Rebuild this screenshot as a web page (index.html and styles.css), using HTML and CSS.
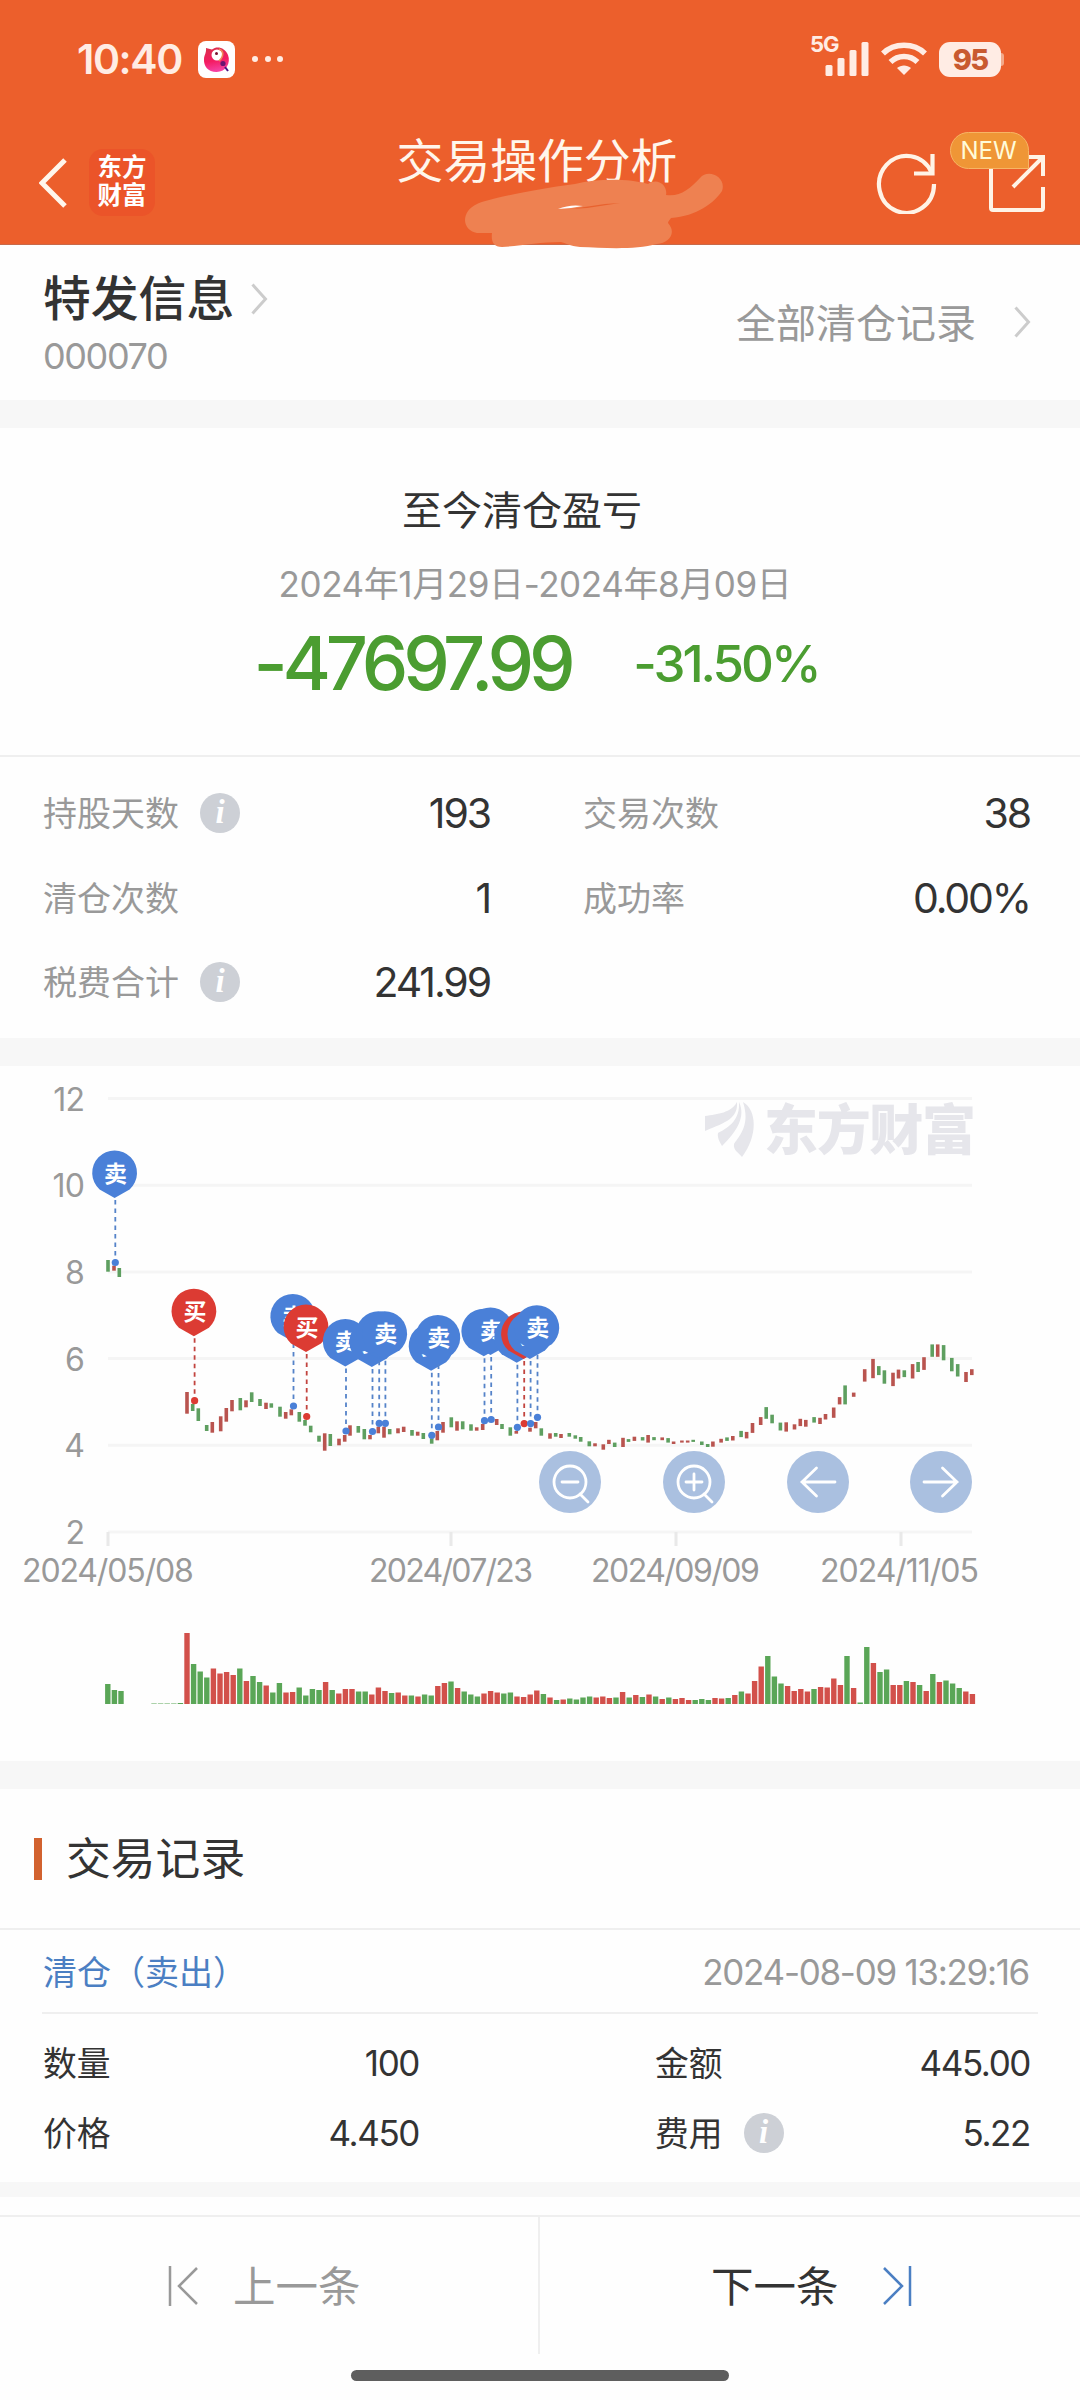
FILE: index.html
```html
<!DOCTYPE html>
<html lang="zh-CN">
<head>
  <meta charset="UTF-8" />
  <meta name="viewport" content="width=device-width, initial-scale=1" />
  <title>交易操作分析</title>
  <link rel="stylesheet" href="styles.css">
</head>
<body>
  <header class="header">
    <div class="status">
      <span class="time">10:40</span>
      <svg class="app-icon" width="37" height="37" viewBox="0 0 37 37">
        <defs>
          <linearGradient id="bird" x1="0" y1="0" x2="0.2" y2="1">
            <stop offset="0" stop-color="#d8304a" />
            <stop offset="0.6" stop-color="#f41c62" />
            <stop offset="1" stop-color="#f53fa0" />
          </linearGradient>
        </defs>
        <rect width="37" height="37" rx="8" fill="#fff" />
        <path d="M8 7 L14 8.500 C19 4.500 27 6.500 30 14 C33 22 28 31 18.500 31 C10 31 5.500 25 6 18 C6.200 14 8.500 12 8 7Z" fill="url(#bird)" />
        <circle cx="19" cy="14" r="5.500" fill="#fff" />
        <circle cx="18.500" cy="12.500" r="1.500" fill="#7a1030" />
        <path d="M21 8 C26 10 26 15 21 20" fill="none" stroke="#f08a5a" stroke-width="1.600" />
        <circle cx="25" cy="22.500" r="2.600" fill="#6a1270" />
        <path d="M27 26 l3 4" stroke="#4a1480" stroke-width="2" />
      </svg>
      <span class="dots"><i></i><i></i><i></i></span>
      <svg class="signal" width="60" height="54" viewBox="0 -12 60 54">
        <text x="0" y="16" class="net">5G</text>
        <g fill="#ffece4">
          <rect x="15.500" y="29" width="7" height="11" rx="1.500" />
          <rect x="27.500" y="22" width="7" height="18" rx="1.500" />
          <rect x="39.500" y="14" width="7" height="26" rx="1.500" />
          <rect x="51.500" y="6" width="7" height="34" rx="1.500" />
        </g>
      </svg>
      <svg class="wifi" width="46" height="34" viewBox="0 0 46 34">
        <g fill="none" stroke="#ffece4" stroke-width="5.500">
          <path d="M2 11.500 C13 0.500 33 0.500 44 11.500" />
          <path d="M9.500 20 C17 12.500 29 12.500 36.500 20" />
        </g>
        <path d="M16 26 C20 22.500 26 22.500 30 26 L23 33Z" fill="#ffece4" />
      </svg>
      <span class="battery">95</span>
    </div>
    <div class="nav">
      <svg class="back" width="30" height="52" viewBox="0 0 30 52">
        <path d="M26 3 L3 26 L26 49" fill="none" stroke="#fff6ec" stroke-width="5" />
      </svg>
      <div class="brand">东方<br>财富</div>
      <h1 class="title">交易操作分析</h1>
      <svg class="refresh" width="62" height="62" viewBox="0 0 62 62">
        <path d="M58 32 A27.500 28.500 0 1 1 55.500 20.500" fill="none" stroke="#fff3e6" stroke-width="4.200" />
        <path d="M56.500 2 V21.500 H38" fill="none" stroke="#fff3e6" stroke-width="4.200" />
      </svg>
      <div class="share">
        <svg width="58" height="60" viewBox="0 0 58 60">
          <g fill="none" stroke="#fff3e6" stroke-width="4">
            <path d="M3 12 V55 Q3 57 5 57 H53 Q55 57 55 55 V34" />
            <path d="M38 4 H55 V23" />
            <path d="M55 4 L25 34" />
          </g>
        </svg>
        <span class="badge">NEW</span>
      </div>
    </div>
    <!-- hidden account line -->
    <svg class="scribble" width="270" height="76" viewBox="0 0 270 76">
      <path d="M31 30 h8" stroke="#ffe9da" stroke-width="2" />
      <path d="M12 31 C22 26 65 17 110 11 C135 5 165 6 183 11 C193 4 203 13 201 22 C215 24 225 16 235 5 C243 -5 262 4 257 18 C249 30 232 43 206 45 C205 47 203 48 203 50 C212 60 204 70 192 71 C170 77 140 75 115 74 C105 73 100 70 96 69 C75 69 55 73 37 74 C28 74 26 68 27 60 L12 60 C-4 57 -4 38 12 31Z" fill="#ee8151" />
      <path d="M106 36 L140 31 L155 30 L122 35Z" fill="#e8622f" />
      <path d="M93 36 Q105 31 118 33 L106 35Z" fill="#fff" />
    </svg>
  </header>

  <section class="stock">
    <div>
      <div class="stock-name">特发信息
        <svg width="17" height="32" viewBox="0 0 17 32"><path d="M1.500 1.500 L14.500 16 L1.500 30.500" fill="none" stroke="#ccc" stroke-width="3" /></svg>
      </div>
      <div class="stock-code">000070</div>
    </div>
    <div class="all-records"><span>全部清仓记录</span>
      <svg width="17" height="32" viewBox="0 0 17 32"><path d="M1.500 1.500 L14.500 16 L1.500 30.500" fill="none" stroke="#ccc" stroke-width="3" /></svg>
    </div>
  </section>

  <section class="summary">
    <h2>至今清仓盈亏</h2>
    <div class="period">2024年1月29日-2024年8月09日</div>
    <div class="profit"><span class="amount">-47697.99</span><span class="percent">-31.50%</span></div>
  </section>

  <section class="stats">
    <div class="stat"><span>持股天数</span><i class="info">i</i><b>193</b></div>
    <div class="stat"><span>交易次数</span><b>38</b></div>
    <div class="stat"><span>清仓次数</span><b>1</b></div>
    <div class="stat"><span>成功率</span><b>0.00%</b></div>
    <div class="stat"><span>税费合计</span><i class="info">i</i><b>241.99</b></div>
  </section>

  <section class="chart">
    <svg id="chart" width="1080" height="695" viewBox="0 1066 1080 695">
      <g id="grid"></g>
      <g class="watermark">
        <path d="M705 1116 C718 1114 731 1113 737 1102 C738 1118 727 1122 705 1131Z" />
        <path d="M718 1133 C730 1127 740 1119 739 1102 C746 1117 737 1131 722 1146 C720 1142 717 1138 718 1133Z" />
        <path d="M743 1102 C757 1110 758 1136 742 1157 C738 1152 733 1150 734 1144 C741 1134 750 1124 743 1102Z" />
        <text x="764" y="1150" textLength="212">东方财富</text>
      </g>
      <g id="candles"></g>
      <g id="pins"></g>
      <g class="tool">
        <circle cx="570" cy="1482" r="31" />
        <circle class="line" cx="570" cy="1482" r="16" />
        <path d="M562 1482 h16 M580 1494 l8 8" />
      </g>
      <g class="tool">
        <circle cx="694" cy="1482" r="31" />
        <circle class="line" cx="694" cy="1482" r="16" />
        <path d="M686 1482 h16 M694 1474 v16 M704 1494 l8 8" />
      </g>
      <g class="tool">
        <circle cx="818" cy="1482" r="31" />
        <path d="M835 1482 H802 M816.500 1468 L802 1482 L816.500 1496" />
      </g>
      <g class="tool">
        <circle cx="941" cy="1482" r="31" />
        <path d="M924 1482 H957 M942.500 1468 L957 1482 L942.500 1496" />
      </g>
      <g id="volumes"></g>
    </svg>
  </section>

  <section class="records">
    <h3>交易记录</h3>
    <div class="record-head"><span class="kind">清仓（卖出）</span><span class="when">2024-08-09 13:29:16</span></div>
    <div class="record-body">
      <div class="cell"><span>数量</span><b>100</b></div>
      <div class="cell"><span>金额</span><b>445.00</b></div>
      <div class="cell"><span>价格</span><b>4.450</b></div>
      <div class="cell"><span>费用</span><i class="info">i</i><b>5.22</b></div>
    </div>
  </section>

  <footer class="pager">
    <div class="prev">
      <svg width="32" height="42" viewBox="0 0 32 42"><path d="M2 1 V41 M29 3 L11 21 L29 39" fill="none" stroke="#999" stroke-width="2.500" /></svg>
      <span>上一条</span>
    </div>
    <div class="next">
      <span>下一条</span>
      <svg width="32" height="42" viewBox="0 0 32 42"><path d="M29 1 V41 M3 3 L21 21 L3 39" fill="none" stroke="#4b7fc3" stroke-width="2.500" /></svg>
    </div>
  </footer>
  <div class="home-bar"></div>

  <script src="chart.js"></script>
</body>
</html>
```
FILE: styles.css
```css
* {
  box-sizing: border-box;
}
body {
  margin: 0;
  width: 1080px;
  height: 2400px;
  overflow: hidden;
  background: #fefefe;
  color: #333;
  font-family: Inter, "Noto Sans CJK SC", sans-serif;
}
h1, h2, h3 {
  margin: 0;
  font-weight: 400;
}
b {
  font-weight: 400;
}
svg {
  display: block;
  flex: none;
}

/* header */
.header {
  position: relative;
  height: 245px;
  background: #ec5f2c;
  border-bottom: 1px solid #c86a4a;
}
.status {
  display: flex;
  align-items: center;
  height: 118px;
  padding: 0 79px 0 77px;
}
.time {
  width: 121px;
  color: #ffece4;
  font-size: 41px;
  font-weight: 600;
  letter-spacing: -1.4px;
  line-height: 50px;
}
.dots {
  display: flex;
  gap: 6.5px;
  margin-left: 17px;
}
.dots i {
  width: 6px;
  height: 6px;
  border-radius: 50%;
  background: #ffece4;
}
.signal {
  margin-left: auto;
  margin-top: -16px;
}
.net {
  font-size: 22px;
  font-weight: 700;
  letter-spacing: -1px;
  fill: #ffece4;
}
.wifi {
  margin-left: 11px;
}
.battery {
  position: relative;
  margin-left: 12px;
  width: 62px;
  height: 35px;
  border-radius: 11px;
  background: #ffece4;
  color: #c85a30;
  font-size: 29px;
  font-weight: 800;
  letter-spacing: -1.8px;
  line-height: 35px;
  text-align: center;
}
.battery::after {
  content: "";
  position: absolute;
  right: -3px;
  top: 11px;
  width: 3px;
  height: 13px;
  border-radius: 0 3px 3px 0;
  background: #f3a98a;
}
.nav {
  display: flex;
  align-items: center;
  height: 129px;
  padding: 0 34px 0 39px;
}
.brand {
  width: 66px;
  height: 67px;
  margin-left: 20px;
  padding-top: 4px;
  border-radius: 14px;
  background: #eb5429;
  color: #fff;
  font-size: 24.5px;
  font-weight: 700;
  line-height: 28px;
  text-align: center;
}
.title {
  flex: 1;
  margin: -43px 0 0 73px;
  color: #fff6ec;
  font-size: 46.8px;
  line-height: 60px;
  text-align: center;
}
.refresh {
  margin-left: 30px;
}
.share {
  position: relative;
  margin-left: 50px;
}
.badge {
  position: absolute;
  left: -38px;
  top: -21px;
  width: 79px;
  height: 37px;
  border: 1px solid #f7b565;
  border-radius: 19px 19px 0 19px;
  background: #ef9636;
  color: #fffbd8;
  font-size: 24px;
  line-height: 36px;
  padding-right: 2px;
  text-align: center;
}
.scribble {
  position: absolute;
  left: 465px;
  top: 173px;
}

/* stock line */
.stock {
  display: flex;
  justify-content: space-between;
  height: 183px;
  padding: 24px 49px 0 43px;
  border-bottom: 28px solid #f7f7f7;
}
.stock-name {
  display: flex;
  align-items: center;
  gap: 17px;
  font-size: 47.8px;
  font-weight: 500;
  line-height: 60px;
}
.stock-code {
  color: #999;
  font-size: 36px;
  letter-spacing: -1.4px;
  line-height: 54px;
}
.all-records {
  display: flex;
  align-items: center;
  gap: 38px;
  height: 106px;
  color: #999;
  font-size: 40px;
}
.all-records span {
  padding-bottom: 3px;
}

/* profit */
.summary {
  height: 329px;
  padding-top: 53px;
  border-bottom: 2px solid #efefef;
  text-align: center;
}
.summary h2 {
  padding-right: 36px;
  font-size: 40px;
  line-height: 60px;
}
.period {
  margin-top: 15px;
  padding-right: 10px;
  color: #999;
  font-size: 35px;
  line-height: 56px;
  letter-spacing: -0.4px;
}
.profit {
  display: flex;
  justify-content: center;
  align-items: center;
  gap: 63px;
  height: 102px;
  padding-right: 8px;
  color: #4b9d31;
}
.amount {
  font-size: 74px;
  font-weight: 500;
  letter-spacing: -5.2px;
}
.percent {
  font-size: 51px;
  font-weight: 500;
  letter-spacing: -3px;
}

/* numbers */
.stats {
  display: grid;
  grid-template-columns: 447px 447px;
  grid-auto-rows: 84.5px;
  column-gap: 93px;
  height: 309px;
  padding: 14px 0 0 43px;
  border-bottom: 28px solid #f7f7f7;
}
.stat, .cell {
  display: flex;
  align-items: center;
}
.stat span, .cell span {
  padding-bottom: 3px;
}
.stat span {
  color: #999;
  font-size: 34px;
}
.stat b {
  margin-left: auto;
  font-size: 41px;
  letter-spacing: -2.1px;
}
.info {
  width: 40px;
  height: 40px;
  margin-left: 21px;
  border-radius: 50%;
  background: #cdd0d6;
  color: #fff;
  font: italic bold 33px/39px "Liberation Serif", serif;
  text-align: center;
}

/* chart */
.chart {
  height: 723px;
  border-bottom: 28px solid #f7f7f7;
}
.grid-line {
  stroke: #f5f5f5;
  stroke-width: 3;
}
.tick {
  stroke: #e9e9e9;
  stroke-width: 3;
}
.axis {
  fill: #999;
  font-size: 32px;
  letter-spacing: -0.9px;
}
.watermark {
  fill: #e6e6eb;
  font-size: 54px;
  font-weight: 900;
}
.up {
  fill: #b9544f;
}
.down {
  fill: #5e9f60;
}
.volume.up {
  fill: #d2504b;
}
.volume.down {
  fill: #5aa657;
}
.pin text {
  fill: #fff;
  font-size: 23px;
  font-weight: 700;
  text-anchor: middle;
}
.pin line {
  stroke-width: 1.8;
  stroke-dasharray: 4.5 4;
}
.sell {
  fill: #4a80d8;
  stroke: #5583c9;
}
.buy {
  fill: #dc3b33;
  stroke: #c2443f;
}
.pin path, .pin circle, .pin text {
  stroke: none;
}
.tool circle {
  fill: #aac0e0;
}
.tool .line, .tool path {
  fill: none;
  stroke: #fff;
  stroke-width: 2.8;
  stroke-linecap: round;
}

/* records */
.records {
  height: 408px;
  border-bottom: 15px solid #f7f7f7;
}
.records h3 {
  display: flex;
  align-items: center;
  height: 141px;
  padding-left: 34px;
  border-bottom: 2px solid #efefef;
  font-size: 44.8px;
  line-height: 60px;
}
.records h3::before {
  content: "";
  width: 8px;
  height: 42px;
  margin-right: 24px;
  background: #d2622f;
}
.record-head {
  display: flex;
  justify-content: space-between;
  align-items: center;
  height: 84px;
  margin: 0 42px;
  padding: 1px 9px 0 1px;
  border-bottom: 2px solid #efefef;
}
.kind {
  padding-bottom: 3px;
  color: #4b7fc3;
  font-size: 34px;
}
.when {
  color: #999;
  font-size: 35px;
  letter-spacing: -1.3px;
}
.record-body {
  display: grid;
  grid-template-columns: 376px 375px;
  grid-auto-rows: 70px;
  column-gap: 236px;
  padding: 14px 0 0 43px;
}
.cell span {
  font-size: 33.8px;
}
.cell b {
  margin-left: auto;
  font-size: 35px;
  letter-spacing: -1.4px;
}

/* pager */
.pager {
  display: grid;
  grid-template-columns: 1fr 1fr;
  height: 139px;
  margin-top: 18px;
  border-top: 2px solid #efefef;
  font-size: 42.5px;
}
.pager > div {
  display: flex;
  align-items: center;
}
.pager span {
  padding-bottom: 5px;
}
.prev {
  gap: 33px;
  padding-left: 168px;
  border-right: 2px solid #efefef;
  color: #999;
}
.next {
  gap: 42px;
  padding-left: 171px;
}
.home-bar {
  width: 378px;
  height: 11px;
  margin: 16px auto 0;
  border-radius: 6px;
  background: #5e5e5e;
}
```
FILE: chart.js
```js
const NS = "http://www.w3.org/2000/svg";

function add(parent, tag, attrs, text) {
  const el = document.createElementNS(NS, tag);
  for (const k in attrs) el.setAttribute(k, attrs[k]);
  if (text) el.textContent = text;
  parent.appendChild(el);
  return el;
}

const grid = document.getElementById("grid");
const candles = document.getElementById("candles");
const pins = document.getElementById("pins");
const volumes = document.getElementById("volumes");

// price axis
[12, 10, 8, 6, 4, 2].forEach((v, i) => {
  const y = 1098.5 + i * 86.7;
  add(grid, "line", { x1: 108, x2: 972, y1: y, y2: y, class: "grid-line" });
  add(grid, "text", { x: 84, y: y + 12, class: "axis", "text-anchor": "end" }, String(v));
});

// dates
[[108, 22, 171, "2024/05/08"], [451, 369, 163, "2024/07/23"], [676, 591, 168, "2024/09/09"], [901, 820, 158, "2024/11/05"]].forEach(d => {
  add(grid, "line", { x1: d[0], x2: d[0], y1: 1532, y2: 1546, class: "tick" });
  add(grid, "text", { x: d[1], y: 1582, class: "axis", textLength: d[2] }, d[3]);
});

// x, top, bottom, G = down / R = up
const prices = `
108 1260 1271.7 G,114 1265.7 1270.7 R,119.3 1268 1277 G,187 1392 1413.7 R,192.7 1404 1411 G,198.3 1408.3 1421 G,
206.7 1425 1431 G,212.3 1422 1432.7 R,220.7 1416.3 1431.3 R,226.3 1408 1421.7 R,232 1400 1411.3 R,240.3 1398 1410.3 G,
246 1400.3 1407.3 R,251.7 1392.3 1402 G,260 1399 1406 G,266 1402.7 1409 R,271.3 1403.3 1407.7 G,280 1406.7 1416.7 G,
285.7 1412 1418.7 R,291.3 1409.3 1415.3 R,299.3 1412 1421.7 G,305 1420 1425.7 G,310.7 1425.7 1432.3 G,319 1435.7 1441.7 G,
324.7 1433.3 1450.7 R,330.3 1434 1446 G,339 1438.7 1445.3 R,344.7 1435 1441.7 R,350 1425.3 1435.7 R,358.3 1426 1432.7 G,
364.3 1429 1439.3 G,370 1435 1439.3 R,378.3 1426.7 1433.3 R,384 1426.7 1437.7 R,389.7 1429 1434.3 G,398 1428.3 1433.3 R,
403.7 1426.7 1432 R,412 1430 1435.7 G,417.7 1431.7 1435.7 R,423.3 1433 1439 G,431.7 1438.3 1443.7 G,437.3 1431 1440.3 R,
443 1422 1432.7 R,451.3 1417.3 1427.3 G,457 1421.3 1430.7 R,462.7 1421.3 1429.3 G,471 1424.3 1430.7 G,476.7 1427.3 1430.7 R,
482.7 1424 1430 R,496.7 1419 1425 R,502 1424 1429 G,510.3 1427.3 1435.7 G,516.3 1431 1433.7 R,530 1427.7 1431.7 R,
535.7 1422 1428.3 R,541.3 1428.3 1435.7 G,550 1433.3 1438.7 R,555.7 1433 1436.7 G,561 1434 1438 R,569.3 1433 1436.7 G,
575.3 1435.3 1438.7 G,580.7 1437 1441.7 G,589.3 1441.3 1446.3 G,595 1443.3 1446.3 R,603.3 1444.3 1449.7 R,608.9 1439.8 1444 R,
614.7 1442.6 1447 G,623 1437.8 1447 R,628.5 1439.1 1441.9 G,634.4 1436.7 1440.9 R,642.6 1437.1 1440.5 G,648.1 1435 1442.6 R,
654 1437.1 1440.2 G,662.2 1437.4 1440.2 R,668.1 1438.1 1442.6 G,673.6 1441.5 1444 R,681.9 1440.5 1442.6 R,687.7 1440.5 1442.6 R,
693.2 1439.8 1441.9 G,701.8 1441.5 1445 G,707.7 1444 1447 G,712.9 1441.5 1446.7 R,721.1 1438.8 1442.6 R,727 1437.4 1440.9 G,
732.8 1436 1440.5 R,741.1 1430.9 1437.1 G,746.6 1431.9 1438.4 R,752.5 1423 1432.9 R,760.7 1417.1 1425 R,766.2 1407.1 1418.8 G,
772.1 1414.7 1423.3 G,780.4 1422.6 1430.5 G,786.2 1422.3 1431.6 R,794.5 1424.3 1429.5 R,800.3 1418.8 1426.1 R,805.8 1419.9 1426.7 R,
814.1 1417.1 1422.6 G,820 1417.8 1424 R,825.5 1414 1419.5 R,833.7 1407.5 1417.8 R,839.6 1397.1 1404.4 R,845.1 1385.4 1404.4 G,
853.7 1392.6 1396.8 R,864.7 1369.2 1381.6 R,873 1358.9 1378.2 R,878.8 1366.1 1375.1 G,884.4 1370.3 1383.7 G,893 1372.7 1386.1 R,
898.5 1369.6 1378.5 R,904.3 1370.3 1377.1 G,912.6 1364.1 1378.5 R,918.1 1362 1372 G,924 1357.2 1369.9 R,932.2 1344.4 1356.8 G,
937.7 1344.4 1356.8 R,943.6 1345.1 1360.3 G,951.8 1357.9 1371.3 G,957.7 1364.1 1376.5 G,966 1372 1382 R,971.8 1369.2 1375.1 R`;
prices.split(",").forEach(row => {
  const [x, top, bottom, dir] = row.trim().split(" ");
  add(candles, "rect", { x: x - 1.8, y: top, width: 3.6, height: bottom - top, class: dir == "G" ? "down" : "up" });
});

// trades: x, price point y, type
const trades = [
  [115.3, 1262.5, "sell"], [194.6, 1400.7, "buy"], [293.5, 1406, "sell"], [306.7, 1416.5, "buy"],
  [346, 1431, "sell"], [372.5, 1431.5, "sell"], [379.2, 1423.3, "sell"], [385.4, 1423.3, "sell"],
  [431.8, 1435.3, "sell"], [438.5, 1427, "sell"], [484.5, 1420.7, "sell"], [491.2, 1419.5, "sell"],
  [517.4, 1427.3, "sell"], [524.2, 1423.6, "buy"], [530.6, 1423.6, "sell"], [537.5, 1417.3, "sell"]
];
trades.forEach(([x, y, type]) => {
  const g = add(pins, "g", { class: "pin " + type });
  const cx = x - 0.7, cy = y - 89.5;
  add(g, "line", { x1: x, x2: x, y1: cy + 27, y2: y });
  add(g, "circle", { cx: x, cy: y, r: 3.6 });
  add(g, "path", { d: `M${cx} ${cy + 25} L${cx - 15} ${cy + 16.5} A22.4 22.4 0 1 1 ${cx + 15} ${cy + 16.5} Z` });
  add(g, "text", { x: cx + 1, y: cy + 8.5 }, type == "buy" ? "买" : "卖");
});

// volume bars, one slot per trading day
const volume = "20G 14G 13G - - - - .5G .5G .5G .5G 1G 71R 40G 32.5G 26.5G 35.5R 30.5R 32R 29R 35.5G 23R 28G 22G 18.5R 11.5G 21G 11.5R 12R 16.5G 8.5G 15G 14G 22R 14G 10.5R 15R 15R 12.5G 12.5G 9.5R 16.5R 13R 11G 11.5R 8.5R 8.5G 7.5R 9.5G 8.5G 18R 21R 22.5G 16R 12.5G 9.5G 7.5G 10.5R 13R 11.5R 10.5G 11.5G 7.5R 7R 9.5R 13.5R 10G 6.5R 4G 4.5R 5.5G 4.5G 6.5G 7.5G 6.5R 7.5R 6R 6.5G 12R 6.5G 9R 7G 9.5R 7.5G 5R 6.5G 5R 6R 4R 4G 5G 4G 6R 5.5R 6G 9R 12.5G 10.5R 23R 37.5R 48G 27.5G 20.5G 18R 13R 15R 12.5R 15G 17R 16.5R 25.5R 19R 48G 16R 1.5G 57G 41R 32G 34.5G 19R 19R 23G 22R 19G 13R 30G 22R 23.5G 20.5G 16G 12.5R 10R";
volume.split(" ").forEach((v, i) => {
  if (v == "-") return;
  const h = parseFloat(v);
  add(volumes, "rect", { x: 105.1 + i * 6.6, y: 1704 - h, width: 5.4, height: h, class: "volume " + (v.endsWith("G") ? "down" : "up") });
});
```
